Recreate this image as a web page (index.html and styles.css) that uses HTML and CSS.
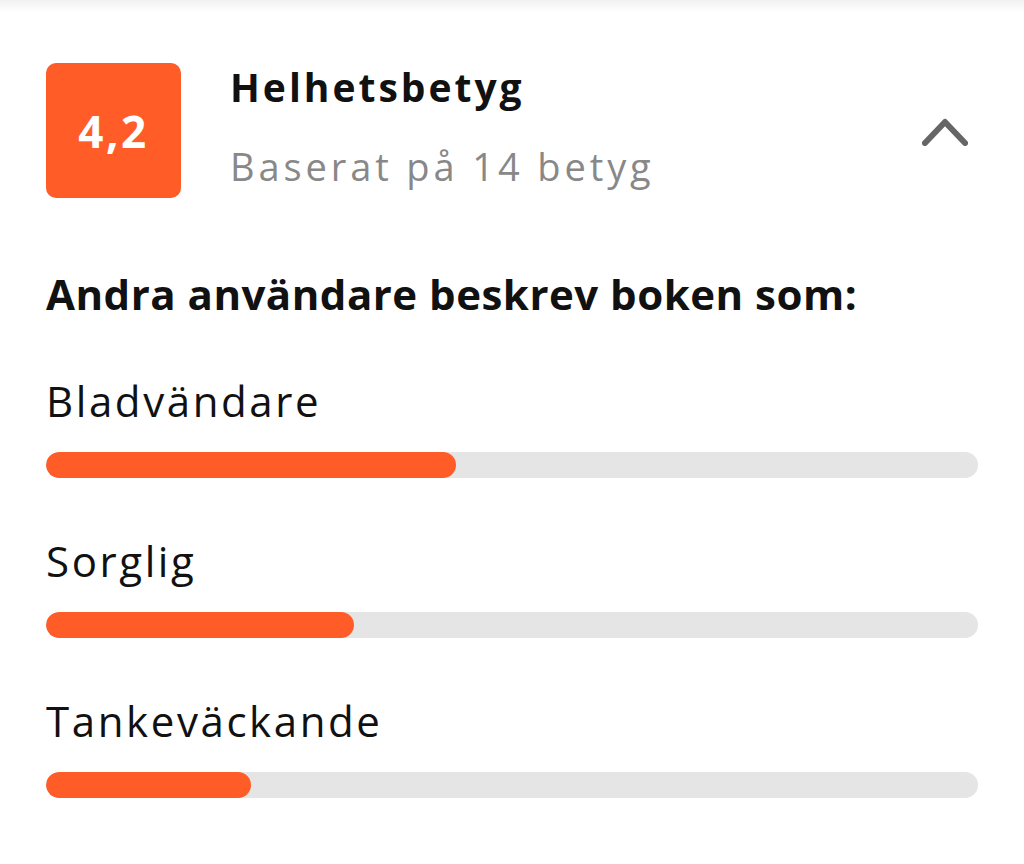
FILE: index.html
```html
<!DOCTYPE html>
<html lang="sv">
<head>
<meta charset="utf-8">
<link rel="stylesheet" href="styles.css">
</head>
<body>
<div class="topshade"></div>
<main class="card">
  <section class="header">
    <div class="badge">4,2</div>
    <div class="titles">
      <div class="title">Helhetsbetyg</div>
      <div class="subtitle">Baserat på 14 betyg</div>
    </div>
    <svg class="chevron" width="46" height="28" viewBox="0 0 46 28">
      <polyline points="3,25 23,4 43,25" fill="none" stroke="#666" stroke-width="6" stroke-linecap="round" stroke-linejoin="round"/>
    </svg>
  </section>
  <h2 class="heading">Andra användare beskrev boken som:</h2>
  <div class="tags">
    <div class="tag">
      <div class="label">Bladvändare</div>
      <div class="track"><div class="fill" style="width:44%"></div></div>
    </div>
    <div class="tag">
      <div class="label">Sorglig</div>
      <div class="track"><div class="fill" style="width:33%"></div></div>
    </div>
    <div class="tag">
      <div class="label">Tankeväckande</div>
      <div class="track"><div class="fill" style="width:22%"></div></div>
    </div>
  </div>
</main>
</body>
</html>
```
FILE: styles.css
```css
html, body {
  margin: 0;
  padding: 0;
  background: #fff;
}
body {
  font-family: "Open Sans", "Noto Sans", sans-serif;
  color: #111;
}
.topshade {
  height: 12px;
  background: linear-gradient(#f1f1f1, #fff);
}
.card {
  padding: 51px 46px 40px 46px;
}
.header {
  display: flex;
  align-items: flex-start;
}
.badge {
  width: 135px;
  height: 135px;
  border-radius: 10px;
  background: #ff5c28;
  color: #fff;
  font-weight: 700;
  font-size: 44px;
  letter-spacing: 2.5px;
  display: flex;
  align-items: center;
  justify-content: center;
  flex-shrink: 0;
}
.titles {
  margin-left: 49px;
  flex: 1;
}
.title {
  font-size: 39px;
  font-weight: 700;
  line-height: 48px;
  letter-spacing: 3px;
  color: #111;
}
.subtitle {
  font-size: 38px;
  line-height: 48px;
  letter-spacing: 3.9px;
  color: #888;
  margin-top: 31px;
}
.chevron {
  align-self: center;
  margin-top: 2px;
  margin-right: 10px;
}
.heading {
  margin: 71px 0 0 0;
  font-size: 42px;
  font-weight: 700;
  line-height: 50px;
  letter-spacing: 0.5px;
  color: #111;
}
.tags {
  display: flex;
  flex-direction: column;
  gap: 58px;
  margin-top: 57px;
}
.tag {
  display: flex;
  flex-direction: column;
}
.label {
  font-size: 42px;
  line-height: 50px;
  letter-spacing: 2.6px;
  color: #111;
}
.track {
  margin-top: 26px;
  height: 26px;
  border-radius: 13px;
  background: #e5e5e5;
  overflow: hidden;
}
.fill {
  height: 100%;
  border-radius: 13px;
  background: #ff5c28;
}
```
